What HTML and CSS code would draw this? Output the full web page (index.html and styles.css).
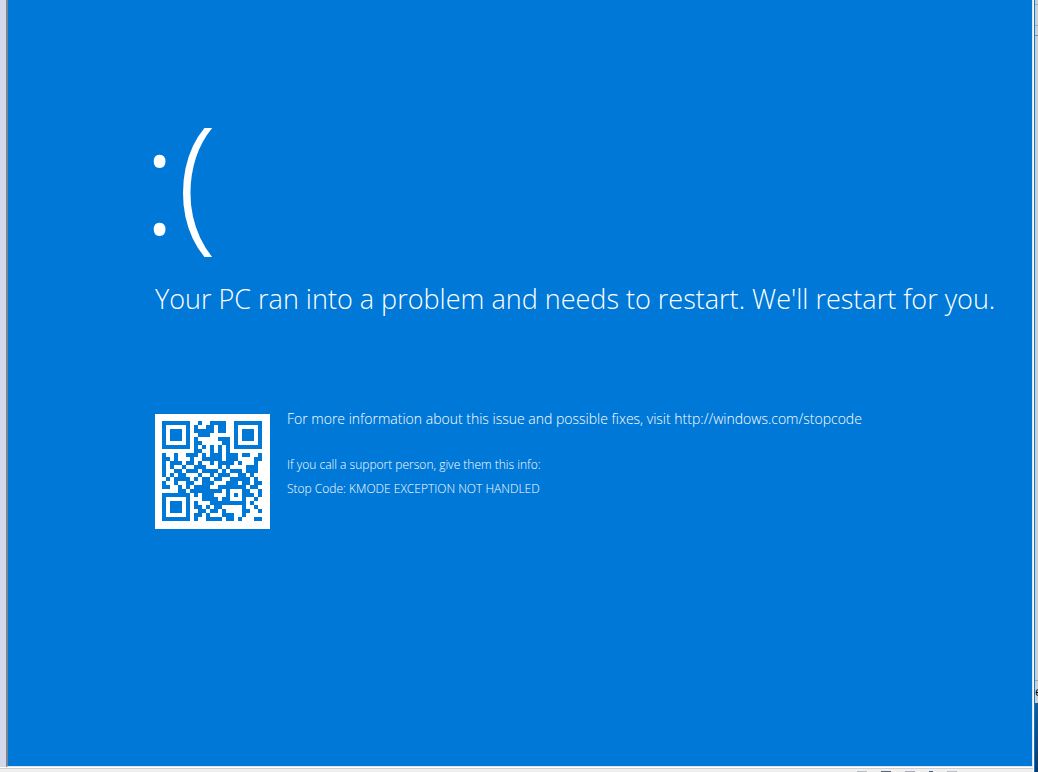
FILE: index.html
```html
<!DOCTYPE html>
<html lang="en">
<head>
  <meta charset="UTF-8">
  <meta name="viewport" content="width=device-width, initial-scale=1.0">
  <title>Stop Code</title>
  <link rel="stylesheet" href="styles.css">
</head>
<body>

  <div class="window">
    <main class="screen">
      <div class="sad-face">:(</div>
      <h1>Your PC ran into a problem and needs to restart. We'll restart for you.</h1>

      <div class="details">
        <svg class="qr" id="qr" viewBox="0 0 25 25" shape-rendering="crispEdges" role="img" aria-label="QR code"></svg>
        <div class="info">
          <p class="more">For more information about this issue and possible fixes, visit http://windows.com/stopcode</p>
          <p>If you call a support person, give them this info:</p>
          <p>Stop Code: KMODE EXCEPTION NOT HANDLED</p>
        </div>
      </div>
    </main>
    <div class="status-bar">
      <span class="light"></span>
      <span class="dark"></span>
      <span></span>
      <span class="small"></span>
      <span class="light"></span>
    </div>
  </div>

  <aside class="behind">
    <div class="tabs"></div>
    <div class="panel"></div>
    <div class="label">e</div>
    <div class="wallpaper"></div>
  </aside>

  <script src="script.js"></script>
</body>
</html>
```

FILE: styles.css
```css
* {
  box-sizing: border-box;
}

body {
  margin: 0;
  min-height: 100vh;
  display: flex;
  background: #d3d9ed;
  font-family: "Open Sans", sans-serif;
}

.window {
  flex: 1;
  min-width: 0;
  display: flex;
  flex-direction: column;
  padding-left: 6px;
  border-right: 1px solid #fff;
}

.screen {
  flex: 1;
  padding: 84px 20px 40px 147px;
  background: #0078d7;
  color: #fff;
  border-left: 2px solid #808488;
  border-right: 1px solid #dfe3e8;
  border-bottom: 1px solid #dfe3e8;
}

.sad-face {
  margin-left: -13px;
  font-size: 147px;
  font-weight: 300;
  line-height: 186px;
}

h1 {
  margin: 13px 0 0;
  font-size: 27px;
  font-weight: 300;
  line-height: 32px;
  white-space: nowrap;
}

.details {
  display: flex;
  gap: 17px;
  margin-top: 99px;
}

.qr {
  flex: none;
  width: 115px;
  height: 115px;
  padding: 7px 8px 8px 7px;
  background: #fff;
  fill: #0078d7;
}

.info p {
  margin: 0;
  font-size: 12px;
  font-weight: 300;
  line-height: 24px;
}

.info .more {
  margin: -7px 0 22px;
  font-size: 14px;
}

.status-bar {
  height: 5px;
  display: flex;
  align-items: flex-end;
  justify-content: flex-end;
  gap: 14px;
  margin-left: -6px;
  padding-right: 76px;
  border-top: 1px solid #fff;
  background: linear-gradient(#d0d0d0 1px, #f0f0f0 1px);
}

.status-bar span {
  width: 10px;
  height: 1px;
  background: #a8a8b8;
}

.status-bar .dark {
  background: #506880;
}

.status-bar .light {
  background: #b8bcc4;
}

.status-bar .small {
  width: 4px;
  background: #406080;
}

.behind {
  flex: none;
  width: 4px;
  display: flex;
  flex-direction: column;
  border-left: 1px solid #0078d7;
  background: #cfcfcf;
}

.tabs {
  height: 36px;
  border-bottom: 1px solid #8c8c8c;
  background: linear-gradient(#cfcfcf 4px, #a8a8a8 4px, #a8a8a8 5px, #cfcfcf 5px, #cfcfcf 25px, #a8a8a8 25px, #a8a8a8 26px, #cfcfcf 26px);
}

.panel {
  flex: 1;
  border-bottom: 1px solid #a8a8a8;
}

.label {
  height: 22px;
  overflow: hidden;
  color: #000;
  font-size: 12px;
  line-height: 22px;
}

.wallpaper {
  height: 69px;
  background: linear-gradient(#1a5c94, #0c3a68);
}
```

FILE: script.js
```js
const modules = [
  '1111111001001111001111111',
  '1000001010011011001000001',
  '1011101011111011001011101',
  '1011101001110000001011101',
  '1011101010000011101011101',
  '1000001011000001101000001',
  '1111111010101010101111111',
  '0000000011001010100000000',
  '1001001110101110111011001',
  '1101000100111110111000011',
  '1011101101001011110100010',
  '1010010011100010100001110',
  '1001101110111101011101110',
  '1010110001001011100110100',
  '0101111010110110011111010',
  '1001001100111000111011011',
  '1100101011110011000110110',
  '0000110111111110010011001',
  '0000000010111000101011101',
  '1111111000111101100010010',
  '1000001010001111111110100',
  '1011101011010110000010010',
  '1011101001101101000011001',
  '1011101011010001110010000',
  '1000001010011110110100011'
];

// light ring around the small alignment square
for (let y = 16; y <= 20; y++) {
  const row = modules[y];
  const ring = (y === 16 || y === 20) ? '11111' : y === 18 ? '10101' : '10001';
  modules[y] = row.slice(0, 16) + ring + row.slice(21);
}

// finder square in the bottom left corner
const finder = ['1111111', '1000001', '1011101', '1011101', '1011101', '1000001', '1111111'];
finder.forEach((line, i) => {
  modules[18 + i] = line + '0' + modules[18 + i].slice(8);
});

let path = '';
modules.forEach((row, y) => {
  [...row].forEach((cell, x) => {
    if (cell === '1') path += `M${x} ${y}h1v1h-1z`;
  });
});

document.getElementById('qr').innerHTML = `<path d="${path}"/>`;
```
